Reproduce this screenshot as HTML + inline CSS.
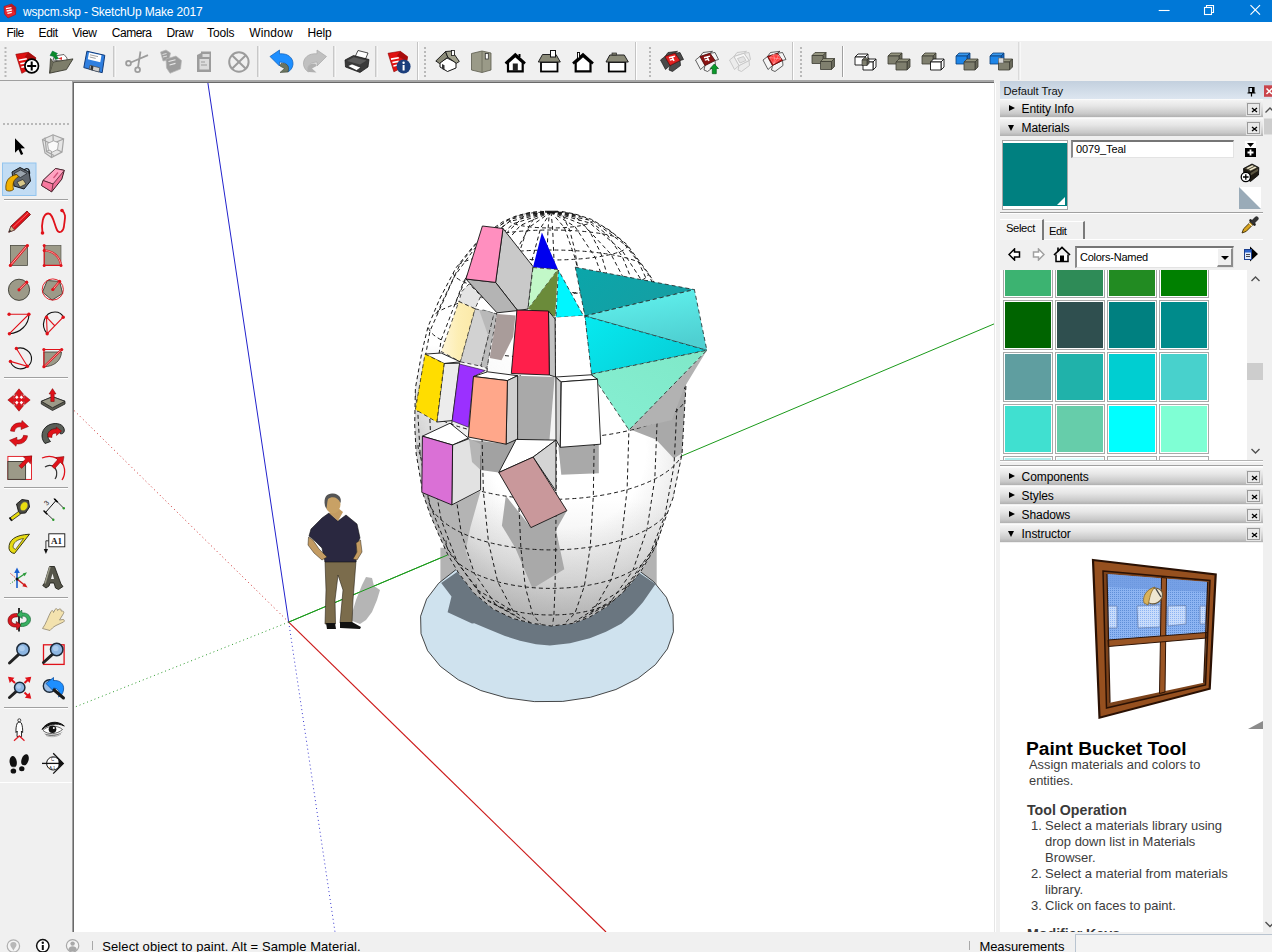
<!DOCTYPE html>
<html>
<head>
<meta charset="utf-8">
<title>wspcm.skp - SketchUp Make 2017</title>
<style>
*{box-sizing:border-box;margin:0;padding:0}
html,body{width:1272px;height:952px;overflow:hidden;background:#f0f0f0;font-family:"Liberation Sans","DejaVu Sans",sans-serif;font-size:12px;color:#000}
.abs{position:absolute}
#titlebar{position:absolute;left:0;top:0;width:1272px;height:23px;background:linear-gradient(#0078d7 0,#0078d7 22px,#7fbbeb 22px,#7fbbeb 23px);color:#fff}
#titlebar .t{position:absolute;left:23px;top:4.6px;font-size:12px;line-height:14px;white-space:nowrap;letter-spacing:-0.175px}
#menubar{position:absolute;left:0;top:22px;width:1272px;height:19px;background:#fff}
#menubar span{position:absolute;top:3.7px;font-size:12px;line-height:14px;white-space:nowrap}
#toolbar{position:absolute;left:0;top:41px;width:1272px;height:40px;background:#f0f0f0}
#toolbar .line{position:absolute;left:0;top:39px;width:72px;height:1px;background:#a0a0a0}
#leftbar{position:absolute;left:0;top:81px;width:72px;height:852px;background:#f0f0f0}
#viewport{position:absolute;left:72px;top:80px;width:922px;height:852px;background:#fff;border-left:1px solid #a0a0a0;border-top:2px solid #a8a8a8;overflow:hidden}
#viewport::before{content:"";position:absolute;left:0;top:0;right:0;bottom:0;border-left:1px solid #696969;border-top:1px solid #696969}
#tray{position:absolute;left:1000px;top:81px;width:272px;height:852px;background:#f0f0f0}
#statusbar{position:absolute;left:0;top:932px;width:1272px;height:20px;background:#f0f0f0}
#statusbar .msg{position:absolute;left:102.3px;top:7.4px;font-size:13px;line-height:15px;white-space:nowrap;letter-spacing:0.08px}
#statusbar .meas{position:absolute;left:979.5px;top:7.4px;font-size:13px;line-height:15px;white-space:nowrap;letter-spacing:-0.1px}
#statusbar .box{position:absolute;left:1075px;top:2px;width:197px;height:18px;background:#f3f3f3;border-top:1px solid #b9c4d0;border-left:1px solid #b9c4d0}
#statusbar .vs{position:absolute;top:9px;width:1px;height:9px;background:#a8a8a8}

#tray .hdr0{position:absolute;left:0;top:0;width:272px;height:18px;background:linear-gradient(#c3d0de,#dde6f0)}
#tray .hdr0 span{position:absolute;left:3.6px;top:3px;font-size:11.2px;line-height:14px;letter-spacing:-0.07px;color:#111}
.ph{position:absolute;left:0;width:263px;height:18px;background:linear-gradient(#f4f4f4 0%,#e6e6e6 35%,#c9c9c9 80%,#b0b0b0 100%);border-top:1px solid #fafafa}
.ph .tri{position:absolute;left:9px;top:4px;width:0;height:0}
.ph .tri.r{top:5px;border-left:6px solid #000;border-top:3.5px solid transparent;border-bottom:3.5px solid transparent}
.ph .tri.d{left:8px;top:6px;border-top:6px solid #000;border-left:3.5px solid transparent;border-right:3.5px solid transparent}
.ph span.l{position:absolute;left:21.6px;top:2px;font-size:12px;line-height:14px;letter-spacing:-0.1px;color:#000}
.ph .x{position:absolute;left:247px;top:3px;width:13px;height:12px;border:1px solid #9a9a9a;background:#e9e9e9;box-shadow:0 0 0 1px #e4e4e4}
.ph .x svg{position:absolute;left:3px;top:3px}
#matpanel{position:absolute;left:0;top:56px;width:263px;height:330px;background:#f0f0f0}
#instr{position:absolute;left:0;top:462px;width:263px;height:390px;background:#fff;overflow:hidden;color:#333}
#trayscroll{position:absolute;left:1264px;top:99px;width:8px;height:834px;background:#f0f0f0}

#matpanel .sw{position:absolute;left:2px;top:3px;width:66px;height:70px;border:1px solid #a6a6a6;background:#fff}
#matpanel .sw i{position:absolute;left:0;top:2px;width:64px;height:63px;background:#008080}
#matpanel .sw b{position:absolute;right:2px;top:56px;width:0;height:0;border-bottom:8px solid #fff;border-left:8px solid transparent}
#matpanel .inp{position:absolute;left:71px;top:3px;width:163px;height:18px;background:#fff;border-top:2px solid #767676;border-left:2px solid #8a8a8a;border-bottom:1px solid #e3e3e3;border-right:1px solid #e3e3e3}
#matpanel .inp span{position:absolute;left:3px;top:1px;font-size:11px;letter-spacing:-0.1px}
#matpanel .hr{position:absolute;left:0;top:75px;width:263px;height:2px;border-top:1px solid #a0a0a0;border-bottom:1px solid #fff}
#matpanel .tab1{position:absolute;left:0;top:82px;width:44px;height:21px;border-right:2px solid #7a7a7a;border-top:1px solid #fff;background:#f3f3f3}
#matpanel .tab1 span{position:absolute;left:6px;top:2px;font-size:11.2px;letter-spacing:-0.35px}
#matpanel .tab2{position:absolute;left:45px;top:84px;width:40px;height:18px;border-right:2px solid #7a7a7a;border-top:1px solid #fff}
#matpanel .tab2 span{position:absolute;left:4px;top:3px;font-size:11.2px;letter-spacing:-0.45px}
#matpanel .tabline{position:absolute;left:44px;top:102px;width:219px;height:1px;background:#fff}
#matpanel .dd{position:absolute;left:75px;top:109px;width:159px;height:22px;background:#fff;border-top:2px solid #767676;border-left:2px solid #8a8a8a;border-bottom:1px solid #e3e3e3;border-right:1px solid #e3e3e3}
#matpanel .dd span{position:absolute;left:3px;top:3px;font-size:11px;letter-spacing:-0.25px}
#matpanel .dd .btn{position:absolute;right:0;top:0;width:16px;height:19px;background:#f0f0f0;border-right:2px solid #8c8c8c;border-bottom:2px solid #8c8c8c;border-top:1px solid #fff;border-left:1px solid #fff}
#matpanel .dd .btn i{position:absolute;left:3px;top:7px;width:0;height:0;border-top:4px solid #000;border-left:4px solid transparent;border-right:4px solid transparent}
#swatches{position:absolute;left:0;top:133px;width:263px;height:190px;background:#fff;overflow:hidden}
#swatches .c{position:absolute;width:50px;height:50px;border:1px solid #a9a9a9;background:#fff}
#swatches .c i{position:absolute;left:1px;top:1px;width:46px;height:46px}
#swatches .sb{position:absolute;left:247px;top:0;width:16px;height:190px;background:#f0f0f0}
#swatches .sb .th{position:absolute;left:0;top:93px;width:16px;height:17px;background:#cdcdcd}
#matpanel .hr2{position:absolute;left:0;top:328px;width:263px;height:2px;border-top:1px solid #a0a0a0;border-bottom:1px solid #fff}
#matpanel .hr3{position:absolute;left:0;top:323px;width:263px;height:2px;border-top:1px solid #b4b4b4;border-bottom:1px solid #fff}

#instr .h1{position:absolute;left:26px;top:194.5px;font-size:19.2px;font-weight:bold;color:#000;white-space:nowrap;line-height:22px}
#instr .p{position:absolute;left:29px;top:214px;font-size:12.85px;line-height:16px;color:#3c3c3c;white-space:nowrap}
#instr .h2{position:absolute;left:27px;top:258px;font-size:14.2px;font-weight:bold;color:#3a3a3a;white-space:nowrap;line-height:18px}
#instr .li{position:absolute;left:31px;margin-top:1px;font-size:13px;line-height:16px;color:#3c3c3c;white-space:nowrap}
#instr .li b{font-weight:normal;display:inline-block;width:14px}
</style>
</head>
<body>
<div id="titlebar"><svg class="abs" style="left:3px;top:3px" width="14" height="16" viewBox="0 0 14 16"><path d="M1 3.5L8.5 1L13 4.5L12.5 11.5L5 15L1.5 11Z" fill="#e8242c" stroke="#a01018" stroke-width="0.6"/><path d="M8.5 1L13 4.5L12.5 11.5L10.5 6.5L5 4Z" fill="#b81820"/><path d="M3 5.6L8.5 4.6M3.6 8L8.8 7M4.4 10.4L8.8 9.4" stroke="#fff" stroke-width="1.3"/></svg>
<svg class="abs" style="left:1150px;top:0" width="122" height="22" viewBox="1150 0 122 22"><path d="M1158.7 10.5H1169.6" stroke="#fff" stroke-width="1.1"/><rect x="1204.5" y="7.5" width="7" height="7" fill="none" stroke="#fff" stroke-width="1.1"/><path d="M1206.5 7.5V5.5H1213.5V12.5H1211.5" fill="none" stroke="#fff" stroke-width="1.1"/><path d="M1250.5 5.2L1260 14.7M1260 5.2L1250.5 14.7" stroke="#fff" stroke-width="1.2"/></svg><div class="t">wspcm.skp - SketchUp Make 2017</div></div>
<div id="menubar">
<span style="left:6.4px;letter-spacing:-0.48px">File</span><span style="left:38.6px;letter-spacing:-0.4px">Edit</span><span style="left:72.2px;letter-spacing:-0.35px">View</span><span style="left:111.8px;letter-spacing:-0.5px">Camera</span><span style="left:166.4px;letter-spacing:-0.35px">Draw</span><span style="left:207.1px;letter-spacing:-0.16px">Tools</span><span style="left:249.3px;letter-spacing:0.12px">Window</span><span style="left:307.6px;letter-spacing:-0.17px">Help</span>
</div>
<div id="toolbar"><div class="line"></div></div>
<!--TOPTB--><svg class="abs" style="left:0;top:41px" width="1272" height="40" viewBox="0 41 1272 40">
<path d="M5.5 47V78" stroke="#b9b9b9" stroke-width="2" stroke-dasharray="2 2"/>
<g transform="translate(15.8 51.8) scale(1)"><path d="M0 2.5L12.5 0.5L20 6L18.5 15L6 21.5Z" fill="#e01010" stroke="#8a0000" stroke-width="0.6"/><path d="M12.5 0.5L20 6L18.5 15L16 9L9 5Z" fill="#a80c0c"/><path d="M3 8.5L11 7M4.5 12L11 10.8M5.5 15.5L11 14.3" stroke="#fff" stroke-width="1.6"/></g>
<circle cx="31.7" cy="66" r="6.8" fill="#fff" stroke="#000" stroke-width="1.7"/><path d="M31.7 61.5v9M27.2 66h9" stroke="#000" stroke-width="2"/>
<path d="M53 60L54.5 56L64 54.5L67 58L67 62Z" fill="#fff" stroke="#444" stroke-width="0.8"/><path d="M58 58.5l4-1.5v3z" fill="#e03030"/>
<path d="M50 55.5L52.5 51L57.5 53.5L56 55L58.5 58.5L55.5 59.5L53.5 56.5Z" fill="#0a8a2a" stroke="#064" stroke-width="0.5"/>
<path d="M49.6 73.2L53.1 62L73 58.9L66.4 69.6Z" fill="#7d7d6a" stroke="#3a3a30" stroke-width="0.9"/><path d="M49.6 73.2L50.5 58.5L53.1 62" fill="#6a6a58" stroke="#3a3a30" stroke-width="0.8"/>
<path d="M86.9 51.2L104.8 55.3L102.2 72.7L83.8 67.6Z" fill="#2f7fe0" stroke="#123c7a" stroke-width="1"/><path d="M89 52.5L101.5 55.3L100.3 62.3L87.8 59.3Z" fill="#fff"/><path d="M90 54.8l8 1.8M89.7 57l6 1.4" stroke="#777" stroke-width="0.7"/><path d="M90 65.3L99.8 67.8L99 72L89.2 69.3Z" fill="#d0d0d0" stroke="#333" stroke-width="0.6"/><path d="M91 65.6L93.5 66.3L92.8 70.2L90.3 69.5Z" fill="#333"/>
<path d="M114 46V77" stroke="#a0a0a0" stroke-width="1"/><path d="M115 46V77" stroke="#fff" stroke-width="1"/>
<g stroke="#9c9c9c" fill="none" stroke-width="1.8"><circle cx="128.5" cy="63.3" r="2.4"/><circle cx="137.6" cy="69.8" r="2.4"/><path d="M130.8 62.5L148 55.2M138 67.3L140.5 51.5"/></g>
<g fill="#9c9c9c" stroke="#b8b8b8" stroke-width="0.7"><path d="M160.5 52L166 50L170.5 53L169 60L163 61Z"/><path d="M166 59L176 56L181.5 60.5L180.5 69L170 73.3L166.5 68Z"/></g><path d="M168.5 61.5l7-1.8M169.5 65l6-1.6" stroke="#e8e8e8" stroke-width="1.1"/><path d="M162.5 54.5l4-1M163 57l4-1" stroke="#e8e8e8" stroke-width="0.9"/>
<path d="M197 55L201 53L201 51.5L211 51.5L211 72L197 72Z" fill="#9c9c9c"/><path d="M202.5 54h7v3h-7zM199.5 59h9.5v10.5h-9.5z" fill="#dcdcdc"/><path d="M201 62h4M201 65h6" stroke="#9c9c9c" stroke-width="1"/>
<g stroke="#9c9c9c" stroke-width="2" fill="none"><circle cx="238.9" cy="62" r="9.7"/><path d="M232 55.2L245.8 68.8M245.8 55.2L232 68.8"/></g>
<path d="M258 46V77" stroke="#a0a0a0" stroke-width="1"/><path d="M259 46V77" stroke="#fff" stroke-width="1"/>
<path d="M270 56.5L279.5 50V53.8C288 53 293.5 58 293 64.5C292.6 68 290.5 70.5 288 72C289.5 68 288.5 62.5 279.5 62V66Z" fill="#1e8fff" stroke="#0b5cb8" stroke-width="0.7"/><path d="M281 63.5C286 63 290 65 288 72L280 72.5L284.5 68.5L280 66Z" fill="#6b7560" stroke="#3c4436" stroke-width="0.6"/>
<path d="M326.5 56.5L317 50V53.8C308.5 53 303 58 303.5 64.5C303.9 68 306 70.5 308.5 72C307 68 308 62.5 317 62V66Z" fill="#c0c0c0" stroke="#a8a8a8" stroke-width="0.7"/><path d="M315.5 63.5C310.5 63 306.5 65 308.5 72L316.5 72.5L312 68.5L316.5 66Z" fill="#b0b0b0"/>
<path d="M334 46V77" stroke="#a0a0a0" stroke-width="1"/><path d="M335 46V77" stroke="#fff" stroke-width="1"/>
<path d="M355 57L358 50.5L368 53L365.5 59Z" fill="#fff" stroke="#222" stroke-width="0.8"/><path d="M345 60L353.5 55.5L369 59.5L368 67L360 72.5L345.5 67Z" fill="#3a3a3a" stroke="#111" stroke-width="0.7"/><path d="M347 61L353.7 57.3L366.5 60.5L360 64.5Z" fill="#5a5a5a"/><path d="M347.5 66L352 64L361 67.5L356.5 70.5Z" fill="#fff" stroke="#111" stroke-width="0.6"/>
<path d="M376 46V77" stroke="#a0a0a0" stroke-width="1"/><path d="M377 46V77" stroke="#fff" stroke-width="1"/>
<g transform="translate(388 50.8) scale(0.98)"><path d="M0 2.5L12.5 0.5L20 6L18.5 15L6 21.5Z" fill="#e01010" stroke="#8a0000" stroke-width="0.6"/><path d="M12.5 0.5L20 6L18.5 15L16 9L9 5Z" fill="#a80c0c"/><path d="M3 8.5L11 7M4.5 12L11 10.8M5.5 15.5L11 14.3" stroke="#fff" stroke-width="1.6"/></g>
<circle cx="403.6" cy="66.5" r="7" fill="#1c3f7c"/><circle cx="403.6" cy="62.8" r="1.2" fill="#fff"/><path d="M403.6 65v5.5" stroke="#fff" stroke-width="2"/>
<path d="M417.5 42V80" stroke="#c4c4c4" stroke-width="1"/><path d="M418.5 42V80" stroke="#fff" stroke-width="1"/>
<path d="M425 47V78" stroke="#b9b9b9" stroke-width="2" stroke-dasharray="2 2"/>
<path d="M440 62.5L447 58L456 62.5L456 68L447.5 71.5L440 67Z" fill="#fff" stroke="#111" stroke-width="1"/><path d="M435.8 61L445.5 51.5L447.8 57.2L439.5 63.5Z" fill="#8a8a78" stroke="#111" stroke-width="0.9"/><path d="M445.5 51.5L452 51L459.3 61.5L456.3 63.3L447.8 57.2Z" fill="#a0a08c" stroke="#111" stroke-width="0.9"/><rect x="451.5" y="50.5" width="3" height="5" fill="#fff" stroke="#111" stroke-width="0.8"/><path d="M442 64v5l2.5 1.3v-5z" fill="#333"/>
<path d="M471.5 53.5L482 51L491 53V70L482 72.5L471.5 70Z" fill="#9a9a88" stroke="#5a5a4c" stroke-width="0.8"/><path d="M482 51V72.5" stroke="#6a6a5c" stroke-width="0.8"/><rect x="485.3" y="53.5" width="3" height="5.5" fill="#fff" stroke="#333" stroke-width="0.8"/>
<path d="M505.5 63.5L515.3 54.5L525 63.5" fill="none" stroke="#000" stroke-width="2.6" stroke-linejoin="miter"/><path d="M508 62.5V71.3H522.7V62.5L515.3 56Z" fill="#fff" stroke="#000" stroke-width="2.2"/><rect x="512.8" y="63.5" width="5" height="7.5" fill="#222"/><rect x="518.5" y="54" width="2" height="3" fill="#000"/>
<rect x="541" y="62" width="16.5" height="9.5" fill="#fff" stroke="#000" stroke-width="1.8"/><path d="M538.3 62L542.5 54.5H556L560.3 62Z" fill="#8a8a78" stroke="#222" stroke-width="1"/><rect x="550.5" y="50.5" width="5" height="6.5" fill="#fff" stroke="#111" stroke-width="1"/>
<path d="M573 63.5L583 54.5L593 63.5" fill="none" stroke="#000" stroke-width="2.6"/><path d="M575.7 62.5V71.3H590.5V62.5L583 56Z" fill="#fff" stroke="#000" stroke-width="2.2"/><rect x="577.5" y="52.5" width="2" height="5.5" fill="#fff" stroke="#000" stroke-width="0.9"/>
<rect x="608.8" y="62" width="16.5" height="9.5" fill="#fff" stroke="#000" stroke-width="1.8"/><path d="M606 62L609.8 55H624.3L628.3 62Z" fill="#8a8a78" stroke="#222" stroke-width="1"/><rect x="612" y="53" width="4.5" height="2" fill="#8a8a78" stroke="#222" stroke-width="0.7"/>
<path d="M635.5 42V80" stroke="#c4c4c4" stroke-width="1"/><path d="M636.5 42V80" stroke="#fff" stroke-width="1"/>
<path d="M650 47V78" stroke="#b9b9b9" stroke-width="2" stroke-dasharray="2 2"/>
<g transform="translate(660 50.5)"><path d="M0.5 9.5L5 6L10 15L5.5 19Z" fill="#4a4a4a" stroke="#1a1a1a" stroke-width="0.7"/><path d="M5 6L8 2L17.5 0.8L15 2.8Z" fill="#4a4a4a" stroke="#1a1a1a" stroke-width="0.7"/><path d="M15 2.8L20 2L23.5 9L20 10Z" fill="#4a4a4a" stroke="#1a1a1a" stroke-width="0.7"/><path d="M10 15L20 10L20.5 15L12.5 21L9 19.5Z" fill="#4a4a4a" stroke="#1a1a1a" stroke-width="0.7"/><path d="M5 6L15 2.8L20 10L10 15Z" fill="#e02020" stroke="#5a0000" stroke-width="0.6"/><path d="M9 7.2L15 5.6M12.3 6.5L14 10.5M9.8 9.6L12.8 8.8" stroke="#fff" stroke-width="1.4" fill="none"/></g>
<g transform="translate(695 50.5)"><path d="M0.5 9.5L5 6L10 15L5.5 19Z" fill="#f4f4f4" stroke="#222" stroke-width="0.7"/><path d="M5 6L8 2L17.5 0.8L15 2.8Z" fill="#f4f4f4" stroke="#222" stroke-width="0.7"/><path d="M15 2.8L20 2L23.5 9L20 10Z" fill="#f4f4f4" stroke="#222" stroke-width="0.7"/><path d="M10 15L20 10L20.5 15L12.5 21L9 19.5Z" fill="#f4f4f4" stroke="#222" stroke-width="0.7"/><path d="M5 6L15 2.8L20 10L10 15Z" fill="#8a1414" stroke="#5a0000" stroke-width="0.6"/><path d="M9 7.2L15 5.6M12.3 6.5L14 10.5M9.8 9.6L12.8 8.8" stroke="#fff" stroke-width="1.4" fill="none"/></g>
<path d="M714.3 64L718.5 68.5H716.3V73.7H712.3V68.5H710.2Z" fill="#0a9a2a" stroke="#065a18" stroke-width="0.7"/>
<g stroke="#c4c4c4" stroke-width="0.9" fill="#ececec"><path d="M729.5 60L734 56.5L739 65.5L734.5 69.5Z"/><path d="M734 56.5L737 52.5L746.5 51.3L744 53.3Z"/><path d="M744 53.3L749 52.5L750.5 59.5L749 60.5Z"/><path d="M739 65.5L749 60.5L749.5 65.5L741.5 71.5L738 70Z"/><path d="M734 56.5L744 53.3L749 60.5L739 65.5Z" fill="#f6f6f6"/><path d="M737.5 58.5L743.5 56.5L746 60.5L740 63Z" fill="#e4e4e4"/></g>
<g transform="translate(762.5 50.5)"><path d="M0.5 9.5L5 6L10 15L5.5 19Z" fill="#f4f4f4" stroke="#222" stroke-width="0.7"/><path d="M5 6L8 2L17.5 0.8L15 2.8Z" fill="#f4f4f4" stroke="#222" stroke-width="0.7"/><path d="M15 2.8L20 2L23.5 9L20 10Z" fill="#f4f4f4" stroke="#222" stroke-width="0.7"/><path d="M10 15L20 10L20.5 15L12.5 21L9 19.5Z" fill="#f4f4f4" stroke="#222" stroke-width="0.7"/><path d="M5 6L15 2.8L20 10L10 15Z" fill="#c01010" stroke="#5a0000" stroke-width="0.6"/><path d="M7 7L11 4L16 4.5L18.5 8.5L11 13.5Z" fill="#ff3a3a" stroke="#ffb0b0" stroke-width="0.5"/><path d="M7 7L18.5 8.5M11 4L12 8L11 13.5M16 4.5L14.5 8L11 13.5" stroke="#ffc0c0" stroke-width="0.5" fill="none"/></g>
<path d="M792.5 42V80" stroke="#c4c4c4" stroke-width="1"/><path d="M793.5 42V80" stroke="#fff" stroke-width="1"/>
<path d="M801 47V78" stroke="#b9b9b9" stroke-width="2" stroke-dasharray="2 2"/>
<path d="M812 55.5L815 52.5H826L823 55.5Z" fill="#94947f" stroke="#3c3c32" stroke-width="0.8" stroke-linejoin="round"/>
<path d="M823 55.5L826 52.5V60.5L823 63.5Z" fill="#6a6a5c" stroke="#3c3c32" stroke-width="0.8" stroke-linejoin="round"/>
<rect x="812" y="55.5" width="11" height="8" fill="#7f7f6e" stroke="#3c3c32" stroke-width="0.8" stroke-linejoin="round"/>
<path d="M820.5 61.5L823.5 58.5H834.5L831.5 61.5Z" fill="#94947f" stroke="#3c3c32" stroke-width="0.8" stroke-linejoin="round"/>
<path d="M831.5 61.5L834.5 58.5V66.5L831.5 69.5Z" fill="#6a6a5c" stroke="#3c3c32" stroke-width="0.8" stroke-linejoin="round"/>
<rect x="820.5" y="61.5" width="11" height="8" fill="#7f7f6e" stroke="#3c3c32" stroke-width="0.8" stroke-linejoin="round"/>
<path d="M842.5 46V77" stroke="#a0a0a0" stroke-width="1"/><path d="M843.5 46V77" stroke="#fff" stroke-width="1"/>
<path d="M855 57L858 54H868L865 57Z" fill="#fff" stroke="#111" stroke-width="0.9" stroke-linejoin="round"/>
<path d="M865 57L868 54V62L865 65Z" fill="#fff" stroke="#111" stroke-width="0.9" stroke-linejoin="round"/>
<rect x="855" y="57" width="10" height="8" fill="#fff" stroke="#111" stroke-width="0.9" stroke-linejoin="round"/>
<path d="M863 62L866 59H876L873 62Z" fill="#fff" stroke="#111" stroke-width="0.9" stroke-linejoin="round"/>
<path d="M873 62L876 59V67L873 70Z" fill="#fff" stroke="#111" stroke-width="0.9" stroke-linejoin="round"/>
<rect x="863" y="62" width="10" height="8" fill="#fff" stroke="#111" stroke-width="0.9" stroke-linejoin="round"/>
<path d="M862 60L864 58H869L867 60Z" fill="#94947f" stroke="#222" stroke-width="0.6" stroke-linejoin="round"/>
<path d="M867 60L869 58V63.5L867 65.5Z" fill="#6a6a5c" stroke="#222" stroke-width="0.6" stroke-linejoin="round"/>
<rect x="862" y="60" width="5" height="5.5" fill="#7f7f6e" stroke="#222" stroke-width="0.6" stroke-linejoin="round"/>
<path d="M888 56L891 53H902L899 56Z" fill="#94947f" stroke="#3c3c32" stroke-width="0.8" stroke-linejoin="round"/>
<path d="M899 56L902 53V61L899 64Z" fill="#6a6a5c" stroke="#3c3c32" stroke-width="0.8" stroke-linejoin="round"/>
<rect x="888" y="56" width="11" height="8" fill="#7f7f6e" stroke="#3c3c32" stroke-width="0.8" stroke-linejoin="round"/>
<path d="M896 62L899 59H910L907 62Z" fill="#94947f" stroke="#3c3c32" stroke-width="0.8" stroke-linejoin="round"/>
<path d="M907 62L910 59V67L907 70Z" fill="#6a6a5c" stroke="#3c3c32" stroke-width="0.8" stroke-linejoin="round"/>
<rect x="896" y="62" width="11" height="8" fill="#7f7f6e" stroke="#3c3c32" stroke-width="0.8" stroke-linejoin="round"/>
<path d="M922 56L925 53H936L933 56Z" fill="#94947f" stroke="#3c3c32" stroke-width="0.8" stroke-linejoin="round"/>
<path d="M933 56L936 53V61L933 64Z" fill="#6a6a5c" stroke="#3c3c32" stroke-width="0.8" stroke-linejoin="round"/>
<rect x="922" y="56" width="11" height="8" fill="#7f7f6e" stroke="#3c3c32" stroke-width="0.8" stroke-linejoin="round"/>
<path d="M930.5 62L933.5 59H944.0L941.0 62Z" fill="#fff" stroke="#111" stroke-width="0.9" stroke-linejoin="round"/>
<path d="M941.0 62L944.0 59V67L941.0 70Z" fill="#fff" stroke="#111" stroke-width="0.9" stroke-linejoin="round"/>
<rect x="930.5" y="62" width="10.5" height="8" fill="#fff" stroke="#111" stroke-width="0.9" stroke-linejoin="round"/>
<path d="M956 56L959 53H970L967 56Z" fill="#3a9af0" stroke="#0c3f7a" stroke-width="0.8" stroke-linejoin="round"/>
<path d="M967 56L970 53V61L967 64Z" fill="#1565c0" stroke="#0c3f7a" stroke-width="0.8" stroke-linejoin="round"/>
<rect x="956" y="56" width="11" height="8" fill="#1e86e8" stroke="#0c3f7a" stroke-width="0.8" stroke-linejoin="round"/>
<path d="M964 62L967 59H978L975 62Z" fill="#94947f" stroke="#3c3c32" stroke-width="0.8" stroke-linejoin="round"/>
<path d="M975 62L978 59V67L975 70Z" fill="#6a6a5c" stroke="#3c3c32" stroke-width="0.8" stroke-linejoin="round"/>
<rect x="964" y="62" width="11" height="8" fill="#7f7f6e" stroke="#3c3c32" stroke-width="0.8" stroke-linejoin="round"/>
<path d="M990 56L993 53H1004L1001 56Z" fill="#3a9af0" stroke="#0c3f7a" stroke-width="0.8" stroke-linejoin="round"/>
<path d="M1001 56L1004 53V61L1001 64Z" fill="#1565c0" stroke="#0c3f7a" stroke-width="0.8" stroke-linejoin="round"/>
<rect x="990" y="56" width="11" height="8" fill="#1e86e8" stroke="#0c3f7a" stroke-width="0.8" stroke-linejoin="round"/>
<path d="M998.5 62L1001.5 59H1012.5L1009.5 62Z" fill="#94947f" stroke="#3c3c32" stroke-width="0.8" stroke-linejoin="round"/>
<path d="M1009.5 62L1012.5 59V67L1009.5 70Z" fill="#6a6a5c" stroke="#3c3c32" stroke-width="0.8" stroke-linejoin="round"/>
<rect x="998.5" y="62" width="11" height="8" fill="#7f7f6e" stroke="#3c3c32" stroke-width="0.8" stroke-linejoin="round"/>
<rect x="998.5" y="58" width="5" height="5" fill="#d8d8d8" stroke="#555" stroke-width="0.5"/>
<path d="M1019 42V80" stroke="#c4c4c4" stroke-width="1"/><path d="M1020 42V80" stroke="#fff" stroke-width="1"/>
</svg><!--/TOPTB-->
<div id="leftbar"></div>
<!--LEFTTB--><svg class="abs" style="left:0;top:81px" width="72" height="852" viewBox="0 81 72 852">
<path d="M3 124H70" stroke="#b9b9b9" stroke-width="2" stroke-dasharray="2 2"/>
<path d="M4 199.5H68" stroke="#a0a0a0" stroke-width="1"/><path d="M4 200.5H68" stroke="#fff" stroke-width="1"/>
<path d="M4 377.5H68" stroke="#a0a0a0" stroke-width="1"/><path d="M4 378.5H68" stroke="#fff" stroke-width="1"/>
<path d="M4 487.5H68" stroke="#a0a0a0" stroke-width="1"/><path d="M4 488.5H68" stroke="#fff" stroke-width="1"/>
<path d="M4 597.5H68" stroke="#a0a0a0" stroke-width="1"/><path d="M4 598.5H68" stroke="#fff" stroke-width="1"/>
<path d="M4 707.5H68" stroke="#a0a0a0" stroke-width="1"/><path d="M4 708.5H68" stroke="#fff" stroke-width="1"/>
<path d="M0 782.5H72" stroke="#fff" stroke-width="1"/>
<path d="M15 138.3V152.8L18.4 149.6L21 155L23.2 154L20.7 148.6L25 148.3Z" fill="#000"/>
<g stroke="#a4a4a4" stroke-width="1.2" fill="none"><path d="M42.5 139.5L53 134.8L63.6 139L62 152L51.5 157.6L45 153Z" fill="#e6e6e6"/><path d="M42.5 139.5L51.5 144L63.6 139M51.5 144V157.6M45 137.5L46.5 151.5L54 155.5M53 134.8L53.5 148L46.5 151.5M53.5 148L62 152" /><path d="M47.5 143.5L53.5 140.8L58.5 142.8L57.5 149.5L52.5 152L48.5 149.5Z" fill="#fafafa" stroke-width="0.9"/></g>
<rect x="2.5" y="163" width="33.5" height="32.5" fill="#c2dcf3" stroke="#92c4ee" stroke-width="1"/>
<path d="M12 172L20 167.5L29 172L30.5 181L24 189L14 186Z" fill="#5f666e" stroke="#15181c" stroke-width="1"/><path d="M14 173.5L20.5 170L27 173.5L20.5 177.5Z" fill="#9aa4ad" stroke="#15181c" stroke-width="0.6"/><path d="M17 182L23 179.5L26 184L20 187Z" fill="#d8c88a" stroke="#15181c" stroke-width="0.6"/><path d="M24 170C27 167 30 169 29.5 174" fill="none" stroke="#15181c" stroke-width="1.3"/><path d="M6 190C5 182 8 176 17 174.5L18.5 177C13 179.5 12.5 184 13.5 189.5C11 191.5 8 191.5 6 190Z" fill="#f0b000" stroke="#5a3c00" stroke-width="0.8"/>
<path d="M41.6 185.5L43 180.5L55.5 168.5L64.3 170.4L61.8 179.2L51.7 191.8Z" fill="#f07098" stroke="#3a1a22" stroke-width="1"/><path d="M43 180.5L55.5 168.5L64.3 170.4L53 184Z" fill="#ffa2c0" stroke="#3a1a22" stroke-width="0.7"/><path d="M41.6 185.5L43 180.5L53 184L51.7 191.8Z" fill="#f8789e" stroke="#3a1a22" stroke-width="0.7"/><path d="M53.5 178l4.5-5.5" stroke="#d05078" stroke-width="1.2"/>
<path d="M8.8 232.2L11 226L27 211L30.5 214.5L14.5 230Z" fill="#e0121a" stroke="#6a0a0a" stroke-width="0.8"/><path d="M8.8 232.2L11 226L14.5 230Z" fill="#d8b890" stroke="#444" stroke-width="0.6"/><path d="M8.8 232.2l1-2.5l1.5 1.6z" fill="#222"/><path d="M12.8 227.5L28.5 212.5" stroke="#ff7a7a" stroke-width="0.8"/>
<path d="M42.5 233C41 224 43 214 48 213.5C53 213 54 224 57 230C59 234 63.5 232 64 226C64.5 220 67 214 62 210.5" fill="none" stroke="#e0121a" stroke-width="1.8"/><circle cx="42.5" cy="233" r="1.8" fill="#e0121a"/><circle cx="62" cy="210.5" r="1.8" fill="#e0121a"/>
<rect x="10.4" y="245.4" width="17" height="20" fill="#9c9a88" stroke="#4a4a40" stroke-width="0.8"/><path d="M10.4 265.4L27.4 245.4" stroke="#e0121a" stroke-width="2.4"/><path d="M10.4 265.4L27.4 245.4" stroke="#ffc8c8" stroke-width="0.9"/><circle cx="10.4" cy="265.4" r="1.6" fill="#e0121a"/><circle cx="27.4" cy="245.6" r="1.6" fill="#e0121a"/>
<rect x="44.2" y="245.4" width="16.8" height="20" fill="#9c9a88" stroke="#4a4a40" stroke-width="0.6"/><path d="M44.2 245.4V265.4H61" stroke="#e0121a" stroke-width="1.2" fill="none"/><path d="M44.2 250.5C53 250.5 60 257 61 265.4" fill="none" stroke="#e0121a" stroke-width="2"/><path d="M44.2 250.5C53 250.5 60 257 61 265.4" fill="none" stroke="#ffd0d0" stroke-width="0.7"/><circle cx="44.2" cy="245.6" r="1.5" fill="#e0121a"/><circle cx="44.2" cy="250.5" r="1.5" fill="#e0121a"/><circle cx="44.2" cy="265.4" r="1.5" fill="#e0121a"/><circle cx="61" cy="265.4" r="1.5" fill="#e0121a"/>
<circle cx="19" cy="289.8" r="10.6" fill="#9c9a88" stroke="#3a3a32" stroke-width="0.9"/><path d="M19 289.8L26.7 282.2" stroke="#e0121a" stroke-width="2.2"/><path d="M19 289.8L26.7 282.2" stroke="#ffd0d0" stroke-width="0.8"/><circle cx="19" cy="289.8" r="1.6" fill="#e0121a"/><circle cx="26.7" cy="282.2" r="1.6" fill="#e0121a"/>
<polygon points="59.6,281.4 62.6,293.5 52.1,300.1 42.5,292.1 47.2,280.5" fill="#9c9a88" stroke="#3a3a32" stroke-width="0.9"/><circle cx="52.8" cy="289.5" r="10.6" fill="none" stroke="#e0121a" stroke-width="0.9"/><path d="M52.8 289.5L59.6 281.4" stroke="#e0121a" stroke-width="2.2"/><path d="M52.8 289.5L59.6 281.4" stroke="#ffd0d0" stroke-width="0.8"/><circle cx="52.8" cy="289.5" r="1.6" fill="#e0121a"/><circle cx="59.6" cy="281.4" r="1.6" fill="#e0121a"/>
<path d="M28.9 314.2C29 325 20 333 9.4 333.7" fill="none" stroke="#111" stroke-width="1.1"/><path d="M9.1 314.2H28.9L9.4 333.7" fill="none" stroke="#e0121a" stroke-width="1.1"/><path d="M27 316L11 332" stroke="#e0121a" stroke-width="0.9"/><circle cx="9.1" cy="314.2" r="1.7" fill="#e0121a"/><circle cx="28.9" cy="314.2" r="1.7" fill="#e0121a"/><circle cx="9.4" cy="333.7" r="1.7" fill="#e0121a"/>
<path d="M47.2 333.7C40 326 44 312 55 312C59 312 62 314 63.2 317.2" fill="none" stroke="#111" stroke-width="1.1"/><path d="M46.5 317.2L47.2 333.7L63.2 317.2M46.5 317.2L55 326" fill="none" stroke="#e0121a" stroke-width="1.1"/><circle cx="46.5" cy="317.2" r="1.7" fill="#e0121a"/><circle cx="63.2" cy="317.2" r="1.7" fill="#e0121a"/><circle cx="47.2" cy="333.7" r="1.7" fill="#e0121a"/>
<path d="M16.4 348.5C24 346 32 352 31.5 359.5C31 366 24 370 18 368.5C14 367.5 11.5 365 10.4 361.4" fill="none" stroke="#111" stroke-width="1.1"/><path d="M16.4 348.5L27.4 366.3L10.4 361.4" fill="none" stroke="#e0121a" stroke-width="1.1"/><circle cx="16.4" cy="348.5" r="1.7" fill="#e0121a"/><circle cx="10.4" cy="361.4" r="1.7" fill="#e0121a"/><circle cx="27.4" cy="366.3" r="1.7" fill="#e0121a"/>
<path d="M43.9 352H61.5C61 361 54 366.5 43.9 366.7Z" fill="#9c9a88" stroke="#3a3a32" stroke-width="0.8"/><path d="M43.9 366.7V349.5H61.7" fill="none" stroke="#e0121a" stroke-width="1.1"/><path d="M43.9 366.7L61.7 349.5" stroke="#e0121a" stroke-width="2"/><path d="M43.9 366.7L61.7 349.5" stroke="#ffd0d0" stroke-width="0.7"/><circle cx="43.9" cy="349.5" r="1.6" fill="#e0121a"/><circle cx="61.7" cy="349.5" r="1.6" fill="#e0121a"/><circle cx="43.9" cy="366.7" r="1.6" fill="#e0121a"/>
<path transform="rotate(0 19 400)" d="M19 388.8L23.6 394.4H20.6V398.4H17.4V394.4H14.4Z" fill="#e0121a" stroke="#7a0000" stroke-width="0.5"/><path transform="rotate(90 19 400)" d="M19 388.8L23.6 394.4H20.6V398.4H17.4V394.4H14.4Z" fill="#e0121a" stroke="#7a0000" stroke-width="0.5"/><path transform="rotate(180 19 400)" d="M19 388.8L23.6 394.4H20.6V398.4H17.4V394.4H14.4Z" fill="#e0121a" stroke="#7a0000" stroke-width="0.5"/><path transform="rotate(270 19 400)" d="M19 388.8L23.6 394.4H20.6V398.4H17.4V394.4H14.4Z" fill="#e0121a" stroke="#7a0000" stroke-width="0.5"/>
<path d="M14.5 395.5L23.5 404.5M23.5 395.5L14.5 404.5" stroke="#e0121a" stroke-width="3.6"/><path d="M15 397.2l1.8-1.8 1.8 1.8-1.8 1.8zM19.6 397.2l1.8-1.8 1.8 1.8-1.8 1.8zM15 402.6l1.8-1.8 1.8 1.8-1.8 1.8zM19.6 402.6l1.8-1.8 1.8 1.8-1.8 1.8z" fill="#fff"/>
<path d="M41.3 401.3L52.5 396.7L65 401.3V404L52.5 410.5L41.3 404Z" fill="#5c5c50" stroke="#222" stroke-width="0.8"/><path d="M41.3 401.3L52.5 396.7L65 401.3L52.5 407.8Z" fill="#9c9a88" stroke="#222" stroke-width="0.8"/><path d="M52.5 388.6L56 394H54.2V401.5H50.8V394H49Z" fill="#e0121a" stroke="#7a0000" stroke-width="0.5"/>
<path d="M10.5 431C11 425.5 16 422 21.5 423L22 420.5L28.5 426.5L21 429.5L21.3 427C17.5 426.3 14.8 428.5 14.5 431.5Z" fill="#e0121a" stroke="#7a0000" stroke-width="0.5"/><path d="M27.5 435.8C27 441.3 22 444.8 16.5 443.8L16 446.3L9.5 440.3L17 437.3L16.7 439.8C20.5 440.5 23.2 438.3 23.5 435.3Z" fill="#e0121a" stroke="#7a0000" stroke-width="0.5"/>
<path d="M45 443.5C40 438 41 428 50 424.5C57 422 64 424.5 64.3 430C64.5 433 62 434.5 60 433.5C60 429.5 55 428 51 430C46.5 432.5 47 438 50.5 441.5Z" fill="#5a5f58" stroke="#1a1a1a" stroke-width="0.9"/><path d="M48 437C47 432 51 428.5 56.5 429L56 427L61.5 431L56.5 435.5L56.5 433.2C53.5 432.8 51.5 434.3 52 437.5Z" fill="#e0121a" stroke="#7a0000" stroke-width="0.5"/>
<rect x="7.9" y="456.4" width="23.6" height="23" fill="#fff" stroke="#e0121a" stroke-width="0.9"/><rect x="7.9" y="461.5" width="17.7" height="17.9" fill="#9c9a88" stroke="#3a3a32" stroke-width="0.9"/><path d="M31.8 455.8L30.5 463.8L28.2 461.6L21.6 468.4L19 465.8L25.6 459L23.4 456.8Z" fill="#e0121a" stroke="#7a0000" stroke-width="0.5"/>
<path d="M42 458C52 453.5 63 459 64.5 469C65 473 64 477 62 480" fill="none" stroke="#e0121a" stroke-width="1.3"/><path d="M45 467C50 463.5 55 466 56.5 471C57 474 56.5 477 55 479" fill="none" stroke="#333" stroke-width="1.2"/><path d="M64 456.5L62.5 464.5L60.3 462.3L54.5 468.8L51.8 466.3L57.6 459.7L55.5 457.6Z" fill="#e0121a" stroke="#7a0000" stroke-width="0.5"/>
<path d="M16.5 504L22 499.5L28.5 500.5L29.5 507L25.5 513L19 513.5Z" fill="#4a4a44" stroke="#111" stroke-width="0.9"/><ellipse cx="24" cy="506.3" rx="3.6" ry="4.8" transform="rotate(30 24 506.3)" fill="#e8dc10" stroke="#555" stroke-width="0.6"/><path d="M9.8 518L18.5 511.5L20.5 514.2L11.8 520.5Z" fill="#e8dc10" stroke="#222" stroke-width="0.8"/><path d="M9.5 517.5l2.3 3.2" stroke="#111" stroke-width="1.6"/>
<path d="M45.5 512.5L56 500.5" stroke="#111" stroke-width="1"/><path d="M43.5 510.5L53.5 520M54 498.5L64 508.5" stroke="#222" stroke-width="0.9"/><path d="M43.8 510.8l3.4 3.4M54.3 498.8l3.4 3.4" stroke="#000" stroke-width="1.6"/><circle cx="53.3" cy="519.8" r="1.2" fill="#2a9a2a"/><circle cx="63.8" cy="508.3" r="1.2" fill="#2a9a2a"/>
<text x="47" y="506" font-family="Liberation Sans,sans-serif" font-size="7" fill="#222" transform="rotate(-48 47 506)">3</text>
<path d="M9 548.5C8.5 540 15 535 29.5 534.2L14.5 553.5C11.5 553 9.5 551.5 9 548.5Z" fill="#e6da12" stroke="#3a3a10" stroke-width="1"/><path d="M13 547.5C13 542.5 17 539.5 23.5 538.5L15.5 549.5Z" fill="#f0f0f0" stroke="#3a3a10" stroke-width="0.7"/>
<rect x="48.8" y="533.8" width="16" height="13" fill="#fff" stroke="#111" stroke-width="0.9"/><text x="51" y="544" font-family="Liberation Serif,serif" font-weight="bold" font-size="9" fill="#222">A1</text><path d="M48.8 540.8H45.9V549.5" fill="none" stroke="#333" stroke-width="1"/><path d="M43.8 549L48 549L45.9 553.9Z" fill="#111"/>
<path d="M17 588V570" stroke="#1a5fd0" stroke-width="1.6"/><path d="M17 567.5L19.8 573H14.2Z" fill="#1a5fd0"/><path d="M17 579L25 585.5" stroke="#d01a1a" stroke-width="1.5"/><path d="M27.6 587.4L22.3 586.2L24.8 583Z" fill="#d01a1a"/><path d="M17 579L24.5 574" stroke="#2a9a3a" stroke-width="1.4"/><path d="M27 572.3L24.6 576.3L22.8 573.4Z" fill="#2a9a3a"/><path d="M17 579L10.5 573.5" stroke="#d01a1a" stroke-width="1" stroke-dasharray="1.2 1.2"/><path d="M17 579L10.5 583.5" stroke="#2a9a3a" stroke-width="1" stroke-dasharray="1.2 1.2"/><circle cx="17" cy="579" r="1.5" fill="#111"/>
<path d="M49.5 566.5H54.5L61 584L63 586.5L58.5 589.5L55.5 588L54 583H50L49 586L46 588L42.7 585.5L44.5 583Z" fill="#55554a" stroke="#15150f" stroke-width="0.8"/><path d="M51 579H54L52.5 573.5Z" fill="#f0f0f0"/><path d="M50 566.8L45 583.5" stroke="#9a9a88" stroke-width="1.5"/>
<path d="M19 608V631.5" stroke="#000" stroke-width="1.6"/><path d="M17.5 613.5C12 613 8 616 8 620.5C8 625 12 627.5 16.5 627L16.8 630L21.5 625L16.2 621.5L16.4 624C13 624 11.5 622.5 11.5 620.5C11.5 618 14 616.5 17.5 617Z" fill="#d81820" stroke="#6a0000" stroke-width="0.6"/><path d="M20.5 626.5C26 627 30.5 624 30.5 619.5C30.5 615 26.5 612.5 22 613L21.7 610L17 615L22.3 618.5L22.1 616C25.5 616 27 617.5 27 619.5C27 622 24.5 623.5 21 623Z" fill="#38b060" stroke="#0a5a2a" stroke-width="0.6"/>
<path d="M42.5 628.5C46 624 48 617 51 611.5C52 610 53.8 610.5 53.5 612.5L55 609.5C56 608 58 608.8 57.5 610.5L59 609.2C60.3 608.3 61.8 609.5 61 611L62.3 611C63.8 611 64.3 612.5 63.3 613.8L59.5 620L63 619.5C64.5 619.5 64.8 621.3 63.5 622L56 625.5C53 627 51.5 629 50 630.5Z" fill="#f3e2ae" stroke="#9a9078" stroke-width="0.9"/>
<path d="M19.28 653.84L9.5 663" stroke="#222" stroke-width="3" stroke-linecap="round"/><circle cx="23" cy="649.5" r="6.2" fill="#8db6e2" stroke="#1c2a3a" stroke-width="1.5"/><circle cx="22" cy="648.5" r="2.79" fill="#b4d2f0" opacity="0.8"/>
<rect x="43.5" y="644.8" width="20.6" height="19.6" fill="none" stroke="#e0121a" stroke-width="1.3"/>
<path d="M52.980000000000004 653.84L43.5 662.5" stroke="#222" stroke-width="3" stroke-linecap="round"/><circle cx="56.7" cy="649.5" r="6.2" fill="#8db6e2" stroke="#1c2a3a" stroke-width="1.5"/><circle cx="55.7" cy="648.5" r="2.79" fill="#b4d2f0" opacity="0.8"/>
<path d="M15 683L9.5 678" stroke="#e0121a" stroke-width="2"/><path transform="translate(9.5 678) rotate(-137.72631099390625)" d="M2 0L-3.5 -3.5V3.5Z" fill="#e0121a"/>
<path d="M24.5 683L29.8 678" stroke="#e0121a" stroke-width="2"/><path transform="translate(29.8 678) rotate(-43.33166255170669)" d="M2 0L-3.5 -3.5V3.5Z" fill="#e0121a"/>
<path d="M24.5 692.5L29.8 697.5" stroke="#e0121a" stroke-width="2"/><path transform="translate(29.8 697.5) rotate(43.33166255170669)" d="M2 0L-3.5 -3.5V3.5Z" fill="#e0121a"/>
<path d="M16.58 691.14L9.5 697.5" stroke="#222" stroke-width="3" stroke-linecap="round"/><circle cx="19.7" cy="687.5" r="5.2" fill="#8db6e2" stroke="#1c2a3a" stroke-width="1.5"/><circle cx="18.7" cy="686.5" r="2.3400000000000003" fill="#b4d2f0" opacity="0.8"/>
<circle cx="49.5" cy="686" r="6.2" fill="#9abce4" stroke="#1c2a3a" stroke-width="1.4"/><path d="M46 683.5L53.5 677.5V680.5C60 680 64.5 684 63.5 690C63 693.5 61 696 58.5 697C60 693.5 59.5 688.5 53.5 688V691Z" fill="#1e8fff" stroke="#0b4fa0" stroke-width="0.8"/><path d="M54 690L63.5 698" stroke="#1a1a1a" stroke-width="3" stroke-linecap="round"/>
<circle cx="19.3" cy="720.3" r="1.5" fill="#fff" stroke="#111" stroke-width="0.8"/><path d="M17.3 723C16 726 15.8 729.5 16 732.5L17.2 731L17 736.5H21.6L21.4 731L22.6 732.5C22.8 729.5 22.6 726 21.3 723C20.5 722 18.2 722 17.3 723Z" fill="#fff" stroke="#111" stroke-width="0.9"/><path d="M14 740.8L19.3 736L24.5 740.8" fill="none" stroke="#e0202a" stroke-width="1.3"/>
<path d="M42 729.5C46 722 57 719.5 64.3 726C57 722.5 48 724 42 729.5Z" fill="#111" stroke="#111" stroke-width="1"/><path d="M44 733.5C49 737.5 58 737 63 731.5C58 735 50 735.5 44 733.5Z" fill="#777"/><path d="M43 730.5C47 725.5 57 724.5 62.5 729.5C57 734.5 48 735 43 730.5Z" fill="#fff" stroke="#444" stroke-width="0.8"/><circle cx="52.5" cy="729.3" r="3.8" fill="#111"/><circle cx="53.8" cy="728" r="1" fill="#fff"/><path d="M46 735.5C51 737.5 57 737 61 734" fill="none" stroke="#999" stroke-width="0.7"/>
<ellipse cx="13.2" cy="762" rx="3.6" ry="6" transform="rotate(-8 13.2 762)" fill="#111"/><ellipse cx="13.4" cy="771" rx="2.8" ry="2.6" fill="#111"/><ellipse cx="25" cy="760" rx="3.5" ry="6" transform="rotate(18 25 760)" fill="#111"/><ellipse cx="21.8" cy="768.8" rx="2.7" ry="2.5" fill="#111"/><path d="M10 767.3h7M20 764.5l6 2" stroke="#f0f0f0" stroke-width="1"/>
<circle cx="53.2" cy="763.4" r="6.6" fill="#fff" stroke="#111" stroke-width="1"/><path d="M42 763.4H62" stroke="#111" stroke-width="1.3"/><path d="M53.2 753.2L63.3 763.4L53.2 773.6" fill="none" stroke="#111" stroke-width="1.3"/><path d="M58.5 759.2L63.5 763.4L58.5 767.6Z" fill="#111"/><text x="51" y="761.3" font-family="Liberation Sans,sans-serif" font-size="4.5" fill="#333">C</text><text x="49.3" y="769" font-family="Liberation Sans,sans-serif" font-size="4" fill="#333">A.1</text>
</svg><!--/LEFTTB-->
<div id="viewport"><!--VIEW--><svg class="abs" style="left:1px;top:1px" width="920" height="849" viewBox="74 83 920 849">
<defs>
<radialGradient id="egg" cx="568" cy="450" r="185" gradientUnits="userSpaceOnUse">
<stop offset="0" stop-color="#b0b0b0" stop-opacity="0"/><stop offset="0.42" stop-color="#b0b0b0" stop-opacity="0"/><stop offset="0.7" stop-color="#b0b0b0" stop-opacity="0.35"/><stop offset="0.88" stop-color="#b0b0b0" stop-opacity="0.75"/><stop offset="1" stop-color="#a8a8a8" stop-opacity="1"/></radialGradient>
<linearGradient id="botg" x1="0" y1="500" x2="0" y2="627" gradientUnits="userSpaceOnUse"><stop offset="0" stop-color="#a0a0a0" stop-opacity="0"/><stop offset="1" stop-color="#a0a0a0" stop-opacity="0.38"/></linearGradient>
<linearGradient id="vfade" x1="0" y1="345" x2="0" y2="440" gradientUnits="userSpaceOnUse"><stop offset="0" stop-color="#000"/><stop offset="1" stop-color="#fff"/></linearGradient>
<mask id="vmask" maskUnits="userSpaceOnUse" x="380" y="200" width="360" height="450"><rect x="380" y="200" width="360" height="450" fill="url(#vfade)"/></mask>
<linearGradient id="gcy" x1="0" y1="0" x2="0.3" y2="1"><stop offset="0" stop-color="#62f5f0"/><stop offset="1" stop-color="#4fd0d2"/></linearGradient>
<linearGradient id="gcy2" x1="0" y1="0" x2="1" y2="0.6"><stop offset="0" stop-color="#06eaf0"/><stop offset="1" stop-color="#08cdd6"/></linearGradient>
<linearGradient id="gaq" x1="0" y1="1" x2="1" y2="0"><stop offset="0" stop-color="#86efd2"/><stop offset="1" stop-color="#7fe8c8"/></linearGradient>
<linearGradient id="gtl" x1="0" y1="0" x2="1" y2="0.5"><stop offset="0" stop-color="#0aa6aa"/><stop offset="1" stop-color="#169ea3"/></linearGradient>
<linearGradient id="gcr" x1="0" y1="0" x2="1" y2="0"><stop offset="0" stop-color="#fff6d8"/><stop offset="0.5" stop-color="#fdeeb4"/><stop offset="1" stop-color="#fbe9a8"/></linearGradient>
<clipPath id="eggclip"><path id="eggpath" d="M551.0 212.0L540.0 211.3L529.0 212.6L516.0 216.0L503.0 221.6L488.0 232.0L473.5 245.9L455.9 268.0L439.7 298.8L428.0 326.8L422.0 351.5L415.4 388.0L414.7 425.0L416.2 454.0L423.1 494.2L430.2 514.6L438.9 535.1L447.5 554.0L458.5 572.9L474.3 593.4L493.2 609.1L513.0 618.5L532.5 623.4L551.6 626.0L572.8 623.4L589.8 617.0L606.8 606.4L623.8 591.6L640.8 571.4L655.6 547.0L663.0 525.0L673.0 498.0L682.0 454.0L684.5 410.0L686.0 385.0L680.0 340.0L668.0 305.0L648.8 273.8L626.8 244.4L610.0 230.5L591.5 219.4L575.0 214.0L562.0 211.5Z"/></clipPath>
</defs>
<path d="M288.7 622.1L207.9 83" stroke="#2222cc" stroke-width="1" fill="none"/>
<path d="M288.7 622.1L995 323.5" stroke="#1a9a1a" stroke-width="1" fill="none"/>
<path d="M288.7 622.1L606 932" stroke="#cc1a1a" stroke-width="1.2" fill="none"/>
<path d="M288.7 622.1L335 932" stroke="#3a3ad0" stroke-width="1" stroke-dasharray="1 3" fill="none"/>
<path d="M288.7 622.1L74 707.4" stroke="#2a9a2a" stroke-width="1" stroke-dasharray="1 3" fill="none"/>
<path d="M288.7 622.1L74 410.4" stroke="#cc2a2a" stroke-width="1" stroke-dasharray="1 3" fill="none"/>
<path d="M440.4 547.7L656.7 547L656.7 585L440.4 583Z" fill="#b3b3b3"/>
<path d="M673.4 631.8L667.4 648.9L655.4 664.7L637.9 678.5L615.9 689.5L590.4 697.3L562.8 701.4L534.3 701.6L506.5 697.9L480.7 690.5L458.3 679.8L440.3 666.3L427.6 650.7L421.0 633.7L420.6 616.2L426.6 599.1L438.6 583.3L456.1 569.5L478.1 558.5L503.6 550.7L531.2 546.6L559.7 546.4L587.5 550.1L613.3 557.5L635.7 568.2L653.7 581.7L666.4 597.3L673.0 614.3Z" fill="#cfe2ee" stroke="#1a1a1a" stroke-width="0.8"/>
<path d="M441.2 583L457 572L490 600L551 620L610 600L638.6 572.5L655.6 584L650 592L642.9 602.2L633 613.5L621.7 623.4L606 631.8L589.8 638.3L570 643.2L549.9 645.6L536 644.3L520 640.8L505 636L488 629L474.3 623.3L472 623.4L447.6 612.3L451.5 596.5Z" fill="#6a7680"/>
<path d="M551.0 212.0L540.0 211.3L529.0 212.6L516.0 216.0L503.0 221.6L488.0 232.0L473.5 245.9L455.9 268.0L439.7 298.8L428.0 326.8L422.0 351.5L415.4 388.0L414.7 425.0L416.2 454.0L423.1 494.2L430.2 514.6L438.9 535.1L447.5 554.0L458.5 572.9L474.3 593.4L493.2 609.1L513.0 618.5L532.5 623.4L551.6 626.0L572.8 623.4L589.8 617.0L606.8 606.4L623.8 591.6L640.8 571.4L655.6 547.0L663.0 525.0L673.0 498.0L682.0 454.0L684.5 410.0L686.0 385.0L680.0 340.0L668.0 305.0L648.8 273.8L626.8 244.4L610.0 230.5L591.5 219.4L575.0 214.0L562.0 211.5Z" fill="#ffffff"/>
<path d="M551.0 212.0L540.0 211.3L529.0 212.6L516.0 216.0L503.0 221.6L488.0 232.0L473.5 245.9L455.9 268.0L439.7 298.8L428.0 326.8L422.0 351.5L415.4 388.0L414.7 425.0L416.2 454.0L423.1 494.2L430.2 514.6L438.9 535.1L447.5 554.0L458.5 572.9L474.3 593.4L493.2 609.1L513.0 618.5L532.5 623.4L551.6 626.0L572.8 623.4L589.8 617.0L606.8 606.4L623.8 591.6L640.8 571.4L655.6 547.0L663.0 525.0L673.0 498.0L682.0 454.0L684.5 410.0L686.0 385.0L680.0 340.0L668.0 305.0L648.8 273.8L626.8 244.4L610.0 230.5L591.5 219.4L575.0 214.0L562.0 211.5Z" fill="url(#egg)" mask="url(#vmask)"/>
<path d="M551.0 212.0L540.0 211.3L529.0 212.6L516.0 216.0L503.0 221.6L488.0 232.0L473.5 245.9L455.9 268.0L439.7 298.8L428.0 326.8L422.0 351.5L415.4 388.0L414.7 425.0L416.2 454.0L423.1 494.2L430.2 514.6L438.9 535.1L447.5 554.0L458.5 572.9L474.3 593.4L493.2 609.1L513.0 618.5L532.5 623.4L551.6 626.0L572.8 623.4L589.8 617.0L606.8 606.4L623.8 591.6L640.8 571.4L655.6 547.0L663.0 525.0L673.0 498.0L682.0 454.0L684.5 410.0L686.0 385.0L680.0 340.0L668.0 305.0L648.8 273.8L626.8 244.4L610.0 230.5L591.5 219.4L575.0 214.0L562.0 211.5Z" fill="url(#botg)"/>
<g clip-path="url(#eggclip)">
<path d="M421.8 492.4L451.8 504.9L480.6 490L480 470L498.8 472.5L505.9 493.8L503 524.7L469 527.6L455.9 532L433.8 513Z" fill="#a9a9a9" opacity="0.0"/>
<path d="M421.8 492.4L451.8 504.9L480.6 491L470.4 527.2L465.6 551L476 580L500 615L440 600L420 520Z" fill="#b4b4b4"/>
<path d="M505.8 495.7L530.9 527.6L566.9 510.7L556 530L564.3 569.3L532.5 588.4L515.2 547.7L501.9 525.7Z" fill="#a9a9a9"/>
<path d="M558.4 446.8L598.8 444.6L598.8 473.2L561.3 474.7Z" fill="#a9a9a9"/>
<path d="M629 429.1L707 350L686 385L683 452.6L673.8 458.5L656 439.4Z" fill="#a9a9a9"/>
<path d="M469 439.4L505 444L517 438L555.9 440L533 457L498.8 472.5L480 470L480.6 455Z" fill="#a2a2a2"/>
</g>
<g clip-path="url(#eggclip)">
<ellipse cx="551" cy="220" rx="42" ry="8" stroke="#1a1a1a" stroke-width="1" stroke-dasharray="4 3" fill="none"/>
<ellipse cx="551" cy="245" rx="77" ry="15" stroke="#1a1a1a" stroke-width="1" stroke-dasharray="4 3" fill="none"/>
<ellipse cx="551" cy="272" rx="98" ry="22" stroke="#1a1a1a" stroke-width="1" stroke-dasharray="4 3" fill="none"/>
<ellipse cx="551" cy="325" rx="123" ry="33" stroke="#1a1a1a" stroke-width="1" stroke-dasharray="4 3" fill="none"/>
<path d="M415 393A136 45.8 0 0 0 687 393" stroke="#1a1a1a" stroke-width="1" stroke-dasharray="4 3" fill="none"/>
<path d="M418 445A133 54.4 0 0 0 684 445" stroke="#1a1a1a" stroke-width="1" stroke-dasharray="4 3" fill="none"/>
<path d="M428 495.3A123 54.6 0 0 0 674 495.3" stroke="#1a1a1a" stroke-width="1" stroke-dasharray="4 3" fill="none"/>
<path d="M446 540.4A105 48 0 0 0 656 540.4" stroke="#1a1a1a" stroke-width="1" stroke-dasharray="4 3" fill="none"/>
<path d="M476 584.3A75 30.7 0 0 0 626 584.3" stroke="#1a1a1a" stroke-width="1" stroke-dasharray="4 3" fill="none"/>
<path d="M551.0 212.0L552.6 228.0L554.0 260.0L554.8 294.0L555.7 358.0L556.2 438.8L556.1 499.4L555.7 549.9L555.0 588.4L553.9 615.0L552.5 625.5" stroke="#1a1a1a" stroke-width="1" stroke-dasharray="4 3" fill="none"/>
<path d="M551.0 212.0L564.4 227.6L575.5 259.2L582.2 292.9L590.2 356.3L594.3 436.4L593.3 496.6L590.2 547.1L584.4 585.9L574.9 613.4L563.7 624.5" stroke="#1a1a1a" stroke-width="1" stroke-dasharray="4 3" fill="none"/>
<path d="M551.0 212.0L575.0 226.6L595.1 257.3L607.1 290.0L621.4 352.1L628.9 430.6L627.1 489.6L621.4 540.1L611.1 579.8L593.9 609.5L573.9 622.2" stroke="#1a1a1a" stroke-width="1" stroke-dasharray="4 3" fill="none"/>
<path d="M551.0 212.0L583.8 225.0L611.1 254.4L627.5 285.8L647.0 345.6L657.1 421.6L654.8 479.0L647.0 529.4L632.9 570.4L609.5 603.5L582.2 618.6" stroke="#1a1a1a" stroke-width="1" stroke-dasharray="4 3" fill="none"/>
<path d="M551.0 212.0L589.8 223.0L622.2 250.7L641.6 280.4L664.8 337.5L676.8 410.4L674.0 465.7L664.8 516.1L648.1 558.6L620.4 596.0L588.0 614.0" stroke="#1a1a1a" stroke-width="1" stroke-dasharray="4 3" fill="none"/>
<path d="M551.0 212.0L592.8 220.8L627.6 246.6L648.5 274.3L673.3 328.4L686.3 397.8L683.3 450.7L673.3 501.0L655.4 545.4L625.6 587.5L590.8 608.9" stroke="#1a1a1a" stroke-width="1" stroke-dasharray="4 3" fill="none"/>
<path d="M551.0 212.0L592.3 218.6L626.7 242.3L647.4 268.0L672.0 319.1" stroke="#1a1a1a" stroke-width="1" stroke-dasharray="4 3" fill="none"/>
<path d="M551.0 212.0L588.5 216.4L619.8 238.2L638.5 262.1L660.8 310.1" stroke="#1a1a1a" stroke-width="1" stroke-dasharray="4 3" fill="none"/>
<path d="M551.0 212.0L581.7 214.5L607.2 234.7L622.5 257.0L640.8 302.4" stroke="#1a1a1a" stroke-width="1" stroke-dasharray="4 3" fill="none"/>
<path d="M551.0 212.0L572.3 213.1L590.1 232.1L600.8 253.0L613.5 296.6" stroke="#1a1a1a" stroke-width="1" stroke-dasharray="4 3" fill="none"/>
<path d="M551.0 212.0L561.3 212.2L569.8 230.5L575.0 250.7L581.1 293.0" stroke="#1a1a1a" stroke-width="1" stroke-dasharray="4 3" fill="none"/>
<path d="M551.0 212.0L549.4 212.0L548.0 230.0L547.2 250.0L546.3 292.0" stroke="#1a1a1a" stroke-width="1" stroke-dasharray="4 3" fill="none"/>
<path d="M551.0 212.0L537.6 212.4L526.5 230.8L519.8 251.1L511.8 293.7" stroke="#1a1a1a" stroke-width="1" stroke-dasharray="4 3" fill="none"/>
<path d="M551.0 212.0L527.0 213.4L506.9 232.7L494.9 254.0L480.6 297.9" stroke="#1a1a1a" stroke-width="1" stroke-dasharray="4 3" fill="none"/>
<path d="M551.0 212.0L518.2 215.0L490.9 235.6L474.5 258.2L455.0 304.4" stroke="#1a1a1a" stroke-width="1" stroke-dasharray="4 3" fill="none"/>
<path d="M551.0 212.0L512.2 217.0L479.8 239.3L460.4 263.6L437.2 312.5" stroke="#1a1a1a" stroke-width="1" stroke-dasharray="4 3" fill="none"/>
<path d="M551.0 212.0L509.2 219.2L474.4 243.4L453.5 269.7L428.7 321.6" stroke="#1a1a1a" stroke-width="1" stroke-dasharray="4 3" fill="none"/>
<path d="M551.0 212.0L509.7 221.4L475.3 247.7L454.6 276.0L430.0 330.9L417.2 401.3L420.2 454.8L430.0 505.1L447.7 549.0L477.2 589.8L511.7 610.3" stroke="#1a1a1a" stroke-width="1" stroke-dasharray="4 3" fill="none"/>
<path d="M551.0 212.0L513.5 223.6L482.2 251.8L463.5 281.9L441.2 339.9L429.6 413.6L432.2 469.5L441.2 519.9L457.2 562.0L484.0 598.1L515.3 615.3" stroke="#1a1a1a" stroke-width="1" stroke-dasharray="4 3" fill="none"/>
<path d="M551.0 212.0L520.3 225.5L494.8 255.3L479.5 287.0L461.2 347.6L451.7 424.3L453.9 482.2L461.2 532.6L474.3 573.2L496.2 605.3L521.8 619.6" stroke="#1a1a1a" stroke-width="1" stroke-dasharray="4 3" fill="none"/>
<path d="M551.0 212.0L529.7 226.9L511.9 257.9L501.2 291.0L488.5 353.4L481.9 432.5L483.4 491.9L488.5 542.3L497.7 581.7L512.9 610.7L530.7 622.9" stroke="#1a1a1a" stroke-width="1" stroke-dasharray="4 3" fill="none"/>
<path d="M551.0 212.0L540.7 227.8L532.2 259.5L527.0 293.3L520.9 357.0L517.7 437.4L518.5 497.7L520.9 548.2L525.3 586.9L532.6 614.1L541.2 624.9" stroke="#1a1a1a" stroke-width="1" stroke-dasharray="4 3" fill="none"/>
</g>
<path d="M551.0 212.0L540.0 211.3L529.0 212.6L516.0 216.0L503.0 221.6L488.0 232.0L473.5 245.9L455.9 268.0L439.7 298.8L428.0 326.8L422.0 351.5L415.4 388.0L414.7 425.0L416.2 454.0L423.1 494.2L430.2 514.6L438.9 535.1L447.5 554.0L458.5 572.9L474.3 593.4L493.2 609.1L513.0 618.5L532.5 623.4L551.6 626.0L572.8 623.4L589.8 617.0L606.8 606.4L623.8 591.6L640.8 571.4L655.6 547.0L663.0 525.0L673.0 498.0L682.0 454.0L684.5 410.0L686.0 385.0L680.0 340.0L668.0 305.0L648.8 273.8L626.8 244.4L610.0 230.5L591.5 219.4L575.0 214.0L562.0 211.5Z" stroke="#1a1a1a" stroke-width="1" stroke-dasharray="4 3" fill="none"/>
<path d="M545 211.6L558 211.6" stroke="#111" stroke-width="1.8" opacity="0.85"/>
<path d="M461.8 291.5L469 284L480.9 295.9L475 308.8L458.8 301.5Z" fill="#e4e4e4" stroke="#222" stroke-width="0.8" stroke-linejoin="round" stroke-dasharray="4 3"/>
<path d="M482 309L494 313L491 317Z" fill="#8a9090" stroke="none" stroke-width="0.9" stroke-linejoin="round" />
<path d="M503 228.5L533 266.5L528 309L517.6 310.6L495.6 282.4Z" fill="#c9c9c9" stroke="#111" stroke-width="0.9" stroke-linejoin="round" />
<path d="M465.9 279L495.6 282.4L517.6 310.6L497 312.8Z" fill="#b4b4b4" stroke="#111" stroke-width="0.9" stroke-linejoin="round" />
<path d="M482.4 226L503 228.5L495.6 282.4L465.9 279Z" fill="#ff8fbf" stroke="#111" stroke-width="0.9" stroke-linejoin="round" />
<path d="M541.9 232.6L533 267.2L558 269.4Z" fill="#0000ee" stroke="none" stroke-width="0.9" stroke-linejoin="round" />
<path d="M533 267.5L558 269.5L528 309Z" fill="#c2f8c8" stroke="#222" stroke-width="0.8" stroke-linejoin="round" stroke-dasharray="4 3"/>
<path d="M558 269.5L528 309L555 316.5Z" fill="#6b8b3a" stroke="none" stroke-width="0.9" stroke-linejoin="round" />
<path d="M558.4 270.1L555.9 317.6L583.4 315.7Z" fill="#00f6ff" stroke="#222" stroke-width="0.8" stroke-linejoin="round" stroke-dasharray="4 3"/>
<path d="M555.9 317.6L583.4 315.7L591.5 374.1L591.2 374.8L555.6 377Z" fill="#ffffff" stroke="none" stroke-width="0.9" stroke-linejoin="round" />
<path d="M706.9 350.3L629 430L672 420L684 388Z" fill="#b2b2b2" stroke="none" stroke-width="0.9" stroke-linejoin="round" />
<path d="M575.3 267.2L694.4 289.6L584.9 316Z" fill="url(#gtl)" stroke="#222" stroke-width="0.8" stroke-linejoin="round" stroke-dasharray="4 3"/>
<path d="M584.9 316L694.4 289.6L706.9 350.3Z" fill="url(#gcy)" stroke="#222" stroke-width="0.8" stroke-linejoin="round" stroke-dasharray="4 3"/>
<path d="M584.9 316L706.9 350.3L591.5 374.1Z" fill="url(#gcy2)" stroke="#222" stroke-width="0.8" stroke-linejoin="round" stroke-dasharray="4 3"/>
<path d="M591.5 374.1L706.9 350.3L629 430Z" fill="url(#gaq)" stroke="#222" stroke-width="0.8" stroke-linejoin="round" stroke-dasharray="4 3"/>
<path d="M475 308.8L494.1 313.2L480.9 366.2L460.3 361.8Z" fill="#d2d2d2" stroke="#222" stroke-width="0.8" stroke-linejoin="round" stroke-dasharray="4 3"/>
<path d="M479 309.5L494.1 313.2L488 335Z" fill="#b9b9b9" stroke="none" stroke-width="0.9" stroke-linejoin="round" />
<path d="M494.1 313.2L497 314L486.8 368.4L480.9 366.2Z" fill="#bcbcbc" stroke="#222" stroke-width="0.8" stroke-linejoin="round" stroke-dasharray="4 3"/>
<path d="M458.8 301.5L475 308.8L460.3 361.8L441.2 351.5Z" fill="url(#gcr)" stroke="#222" stroke-width="0.8" stroke-linejoin="round" stroke-dasharray="4 3"/>
<path d="M497 314L515.4 315.4L513.2 336.8L501.5 360.3L489.7 358Z" fill="#a99c9a" stroke="none" stroke-width="0.9" stroke-linejoin="round" />
<path d="M548.5 311L555.1 319L555.5 377L549.3 375Z" fill="#c2c2c2" stroke="#111" stroke-width="0.9" stroke-linejoin="round" />
<path d="M516.9 310L548.5 311L549.3 375L511.3 373.5Z" fill="#ff1f4b" stroke="#111" stroke-width="0.9" stroke-linejoin="round" />
<path d="M425 354.1L441.2 353L460.3 361.8L444.1 363.5Z" fill="#ffffff" stroke="#111" stroke-width="0.9" stroke-linejoin="round" />
<path d="M444.1 363.5L459.6 363.2L452.2 420.6L436.8 422Z" fill="#ececec" stroke="#111" stroke-width="0.9" stroke-linejoin="round" />
<path d="M425 354.1L444.1 363.5L436.8 422L415.4 409.6Z" fill="#ffdd00" stroke="#222" stroke-width="0.8" stroke-linejoin="round" stroke-dasharray="4 3"/>
<path d="M459.6 364L485.3 370.6L473.5 376.5L468.4 427.2L452.2 420.9Z" fill="#9b30ff" stroke="#222" stroke-width="0.6" stroke-linejoin="round" />
<path d="M517.6 375.7L555.6 377L556 440L517.6 439Z" fill="#a9a9a9" stroke="none" stroke-width="0.9" stroke-linejoin="round" />
<path d="M554.6 377.2L556 377.2L556 440L549.5 440Z" fill="#f4f4f4" stroke="none" stroke-width="0.9" stroke-linejoin="round" />
<path d="M473.5 376.5L487.5 371.8L517.6 375.7L507.4 380.6Z" fill="#ffffff" stroke="#111" stroke-width="0.9" stroke-linejoin="round" />
<path d="M507.4 380.6L517.6 375.7L517.6 439L506.1 444.2Z" fill="#cfcfcf" stroke="#111" stroke-width="0.9" stroke-linejoin="round" />
<path d="M473.5 376.5L507.4 380.6L506.1 444.2L468.3 437Z" fill="#ffa78a" stroke="#111" stroke-width="0.9" stroke-linejoin="round" />
<path d="M555.9 377.2L561 382.4L560.3 447.3L556 440Z" fill="#d0d0d0" stroke="#111" stroke-width="0.9" stroke-linejoin="round" />
<path d="M555.6 377L591.2 374.8L597.5 379.2L561.3 381.8Z" fill="#ffffff" stroke="#111" stroke-width="0.9" stroke-linejoin="round" />
<path d="M561.3 381.8L597.5 379.2L600.7 444.2L560.3 447.3Z" fill="#ffffff" stroke="#111" stroke-width="0.9" stroke-linejoin="round" />
<path d="M422.4 436.2L450 423.2L468.4 438L452.6 445Z" fill="#ffffff" stroke="#111" stroke-width="0.9" stroke-linejoin="round" />
<path d="M452.6 445L469 438.7L480.6 456L480.6 490L451.8 504.9Z" fill="#e2e2e2" stroke="#111" stroke-width="0.9" stroke-linejoin="round" />
<path d="M469 438.7L480.6 444L480.6 470L472 462Z" fill="#b5b5b5" stroke="none" stroke-width="0.9" stroke-linejoin="round" />
<path d="M422.4 436.2L452.6 445L451.8 504.9L421.8 492.4Z" fill="#da70d6" stroke="#111" stroke-width="0.9" stroke-linejoin="round" />
<path d="M498.8 472.5L516.2 439.4L555.9 440.1L533.1 457.1Z" fill="#ffffff" stroke="#111" stroke-width="0.9" stroke-linejoin="round" />
<path d="M533.1 457.1L555.9 440.1L555.9 490.9Z" fill="#d4d4d4" stroke="#111" stroke-width="0.9" stroke-linejoin="round" />
<path d="M498.8 472.5L533.1 457.1L566.9 510.7L530.9 527.6Z" fill="#c9989b" stroke="#111" stroke-width="0.9" stroke-linejoin="round" />
<path d="M350 620L356 600L362 585L366 577L372 578L374 586L380 590L377 600L372 612L366 620L360 624Z" fill="#b5b5b5"/>
<path d="M288.7 622.1L447.5 555" stroke="#1a9a1a" stroke-width="1" fill="none"/>
<path d="M325 561L356 561L353 600L352 623L340 623L343 590L338 575L335 600L335.5 624L325 624L326 590Z" fill="#7b6c4c" stroke="#2a2418" stroke-width="0.6"/>
<path d="M309 536L311 529L322 518L329 513L338 521L346 515L357 524L360 538L357 544L356 562L325 562L322 548L314 540Z" fill="#2a2840" stroke="#111" stroke-width="0.6"/>
<path d="M308.5 537L313 540L319 549L327 557L322 560L314 553L308 545Z" fill="#c39b62" stroke="#2a2418" stroke-width="0.5"/>
<path d="M356 543L360.5 540L362 552L357 560L353 559L357 552Z" fill="#c39b62" stroke="#2a2418" stroke-width="0.5"/>
<path d="M329 513L338 521L343 512L338 508Z" fill="#c39b62"/>
<ellipse cx="333" cy="504" rx="7.5" ry="9.5" fill="#c8a165"/>
<path d="M325 506C323 496 328 493 333 493.5C339 494 342 498 340.5 503C338 497 332 496 328 499C327 503 327 506 326.5 509Z" fill="#555"/>
<path d="M326 623L335 623L336 629L327 629Z" fill="#111"/><path d="M340 622L352 622L361 627L360 629L340 628Z" fill="#111"/>
</svg><!--/VIEW--></div>
<div id="tray"><div class="hdr0"><span>Default Tray</span><svg class="abs" style="left:246px;top:4px" width="26" height="13" viewBox="1246 85 26 13"><path d="M1249 87.5H1254V92.5H1249Z" fill="none" stroke="#000" stroke-width="1.2"/><path d="M1253 87.5V92.5" stroke="#000" stroke-width="2"/><path d="M1247.5 93H1255.5M1251.5 93V96.5" stroke="#000" stroke-width="1.2"/><rect x="1264" y="85.3" width="8" height="11.5" fill="#c9444c"/><path d="M1266.5 88.5L1272 94M1272 88.5L1266.5 94" stroke="#fff" stroke-width="1.5"/></svg></div><div class="ph" style="top:18px"><div class="tri r"></div><span class="l">Entity Info</span><div class="x"><svg width="7" height="6" viewBox="0 0 7 6"><path d="M1 1L6 5M6 1L1 5" stroke="#000" stroke-width="1.25" fill="none"/></svg></div></div><div class="ph" style="top:37px"><div class="tri d"></div><span class="l">Materials</span><div class="x"><svg width="7" height="6" viewBox="0 0 7 6"><path d="M1 1L6 5M6 1L1 5" stroke="#000" stroke-width="1.25" fill="none"/></svg></div></div><div id="matpanel"><div class="sw"><i></i><b></b></div><div class="inp"><span>0079_Teal</span></div><div class="hr"></div><div class="tab1"><span>Select</span></div><div class="tab2"><span>Edit</span></div><div class="tabline"></div><div class="dd"><span>Colors-Named</span><div class="btn"><i></i></div></div>
<svg class="abs" style="left:245px;top:4px" width="11" height="16" viewBox="0 0 11 16"><rect x="0" y="0" width="11" height="16" fill="#fff"/><path d="M2 2h7l-3.5 4z" fill="#000"/><rect x="0" y="7" width="11" height="9" fill="#000"/><path d="M5.5 8.5v6M2.5 11.5h6" stroke="#fff" stroke-width="1.8"/></svg>
<svg class="abs" style="left:240px;top:26px" width="20" height="20" viewBox="1240 163 20 20"><path d="M1243.5 168.5L1252 164L1258.8 167.5L1258.5 175L1250.5 181.5L1244 177Z" fill="#1e1a12" stroke="#000" stroke-width="0.8"/><path d="M1244.5 168.6L1252 164.8L1257.8 167.7L1250.3 171.6Z" fill="#4a4434"/><path d="M1246.3 168.2L1252.3 165.3L1254 166.1L1248 169.1ZM1249 169.6L1255 166.6L1256.6 167.4L1250.6 170.5Z" fill="#efe8cc"/><path d="M1250.6 173L1258 168.6V171L1250.6 175.5Z" fill="#5b5540"/><circle cx="1245.8" cy="177" r="4.6" fill="#fff" stroke="#000" stroke-width="1.3"/><path d="M1245.8 174.2v5.6M1243 177h5.6" stroke="#000" stroke-width="1.3"/></svg>
<svg class="abs" style="left:239px;top:50px" width="22" height="22" viewBox="0 0 22 22"><rect width="22" height="22" fill="#fff"/><path d="M0 0L22 22H0Z" fill="#9aabb8"/></svg>
<svg class="abs" style="left:1241px;top:216px;position:absolute;left:241px;top:79px" width="18" height="18" viewBox="0 0 18 18"><path d="M1 17L2.6 12.8L10 5.5L12.5 8L5.2 15.4Z" fill="#d9a520" stroke="#3a2a08" stroke-width="0.9"/><path d="M8 7L11 10" stroke="#fff" stroke-width="0.8"/><path d="M9.5 4.5L13.5 8.5" stroke="#222" stroke-width="2.6" stroke-linecap="round"/><path d="M12 6L15.5 2.5" stroke="#333" stroke-width="4.2" stroke-linecap="round"/></svg>
<svg class="abs" style="left:244px;top:109px" width="15" height="16" viewBox="0 0 15 16"><path d="M6 0.5L14 8L6 15.5V11H2V5H6Z" fill="#000"/><rect x="0.5" y="3.5" width="7" height="10" fill="#dfe9fb" stroke="#1b3f8f" stroke-width="1"/><rect x="1" y="4" width="6" height="2.5" fill="#2b62c9"/><path d="M2 8.5h4M2 10.5h4" stroke="#333" stroke-width="0.9"/></svg>
<svg class="abs" style="left:8px;top:111px" width="13" height="13" viewBox="0 0 13 13"><path d="M6.5 1L1 6.5L6.5 12V9H11.5V4H6.5Z" fill="#fff" stroke="#000" stroke-width="1.5" stroke-linejoin="miter"/></svg>
<svg class="abs" style="left:32px;top:111px" width="13" height="13" viewBox="0 0 13 13"><path d="M6.5 1L12 6.5L6.5 12V9H1.5V4H6.5Z" fill="#fff" stroke="#a0a0a0" stroke-width="1.5" stroke-linejoin="miter"/></svg>
<svg class="abs" style="left:53px;top:109px" width="18" height="17" viewBox="0 0 18 17"><path d="M3 8.5V15.5H15V8.5" fill="#fff" stroke="#000" stroke-width="1.5"/><path d="M1 9L9 1.5L17 9" fill="none" stroke="#000" stroke-width="1.7"/><rect x="4.2" y="1.5" width="1.6" height="4" fill="#000"/><rect x="7" y="9.5" width="4" height="6" fill="#000"/></svg>
<div id="swatches"><div class="c" style="left:3px;top:-22px"><i style="background:#3cb371"></i></div><div class="c" style="left:55px;top:-22px"><i style="background:#2e8b57"></i></div><div class="c" style="left:107px;top:-22px"><i style="background:#228b22"></i></div><div class="c" style="left:159px;top:-22px"><i style="background:#008000"></i></div><div class="c" style="left:3px;top:30px"><i style="background:#006400"></i></div><div class="c" style="left:55px;top:30px"><i style="background:#2f4f4f"></i></div><div class="c" style="left:107px;top:30px"><i style="background:#008080"></i></div><div class="c" style="left:159px;top:30px"><i style="background:#008b8b"></i></div><div class="c" style="left:3px;top:82px"><i style="background:#5f9ea0"></i></div><div class="c" style="left:55px;top:82px"><i style="background:#20b2aa"></i></div><div class="c" style="left:107px;top:82px"><i style="background:#00ced1"></i></div><div class="c" style="left:159px;top:82px"><i style="background:#48d1cc"></i></div><div class="c" style="left:3px;top:134px"><i style="background:#40e0d0"></i></div><div class="c" style="left:55px;top:134px"><i style="background:#66cdaa"></i></div><div class="c" style="left:107px;top:134px"><i style="background:#00ffff"></i></div><div class="c" style="left:159px;top:134px"><i style="background:#7fffd4"></i></div><div class="c" style="left:3px;top:186px"><i style="background:#afeeee"></i></div><div class="c" style="left:55px;top:186px"><i style="background:#e0ffff"></i></div><div class="c" style="left:107px;top:186px"><i style="background:#f0ffff"></i></div><div class="c" style="left:159px;top:186px"><i style="background:#ffffff"></i></div><div class="sb"><svg style="position:absolute;left:4px;top:6px" width="9" height="6" viewBox="0 0 9 6"><path d="M0.5 5L4.5 1L8.5 5" stroke="#505050" stroke-width="1.4" fill="none"/></svg><div class="th"></div><svg style="position:absolute;left:4px;top:178px" width="9" height="6" viewBox="0 0 9 6"><path d="M0.5 1L4.5 5L8.5 1" stroke="#505050" stroke-width="1.4" fill="none"/></svg></div></div><div class="hr3"></div><div class="hr2"></div></div><div class="ph" style="top:386px"><div class="tri r"></div><span class="l">Components</span><div class="x"><svg width="7" height="6" viewBox="0 0 7 6"><path d="M1 1L6 5M6 1L1 5" stroke="#000" stroke-width="1.25" fill="none"/></svg></div></div><div class="ph" style="top:405px"><div class="tri r"></div><span class="l">Styles</span><div class="x"><svg width="7" height="6" viewBox="0 0 7 6"><path d="M1 1L6 5M6 1L1 5" stroke="#000" stroke-width="1.25" fill="none"/></svg></div></div><div class="ph" style="top:424px"><div class="tri r"></div><span class="l">Shadows</span><div class="x"><svg width="7" height="6" viewBox="0 0 7 6"><path d="M1 1L6 5M6 1L1 5" stroke="#000" stroke-width="1.25" fill="none"/></svg></div></div><div class="ph" style="top:443px"><div class="tri d"></div><span class="l">Instructor</span><div class="x"><svg width="7" height="6" viewBox="0 0 7 6"><path d="M1 1L6 5M6 1L1 5" stroke="#000" stroke-width="1.25" fill="none"/></svg></div></div><div id="instr"><svg class="abs" style="left:80px;top:8px" width="150" height="175" viewBox="1080 551 150 175">
<defs><pattern id="dots" width="2" height="2" patternUnits="userSpaceOnUse"><rect width="2" height="2" fill="#8db4f2"/><rect width="1" height="1" fill="#5f8fd8"/></pattern>
<pattern id="dots2" width="2" height="2" patternUnits="userSpaceOnUse"><rect width="2" height="2" fill="#c9dcfb"/><rect width="1" height="1" fill="#8db4f2"/></pattern></defs>
<path d="M1093 560L1215.7 574.5L1209.7 688.7L1099.5 717.7Z" fill="#96501f" stroke="#2a1104" stroke-width="2.2"/>
<path d="M1103 571L1210 580.5L1205.5 685L1106.5 708Z" fill="#7c431b" stroke="#2a1104" stroke-width="1.5"/>
<path d="M1107 574L1207.7 582L1206 637L1108.5 644Z" fill="url(#dots)"/>
<path d="M1107 574L1207.7 582L1207.2 592L1107.3 587Z" fill="#6f9ae0" opacity="0.75"/>
<path d="M1108.5 644L1206 637L1203.7 682.7L1110 702.7Z" fill="#fff"/>
<path d="M1137 606L1160 605L1160 627L1138 628Z" fill="url(#dots2)" stroke="#6f86b5" stroke-width="0.8"/>
<path d="M1168 606L1186 605.5L1186 624L1168 626Z" fill="url(#dots2)" stroke="#6f86b5" stroke-width="0.8"/>
<path d="M1108 606L1117 606L1117 628L1108.5 628Z" fill="url(#dots2)" stroke="#6f86b5" stroke-width="0.8"/>
<path d="M1200 606L1206 606L1205.5 624L1200 624Z" fill="url(#dots2)" stroke="#6f86b5" stroke-width="0.8"/>
<path d="M1161.5 577.5L1166.5 578L1165 692L1159.5 693.5Z" fill="#9a5524" stroke="#2e1406" stroke-width="1"/>
<path d="M1108 640L1207 632.5L1206.7 638L1108.3 646.5Z" fill="#9a5524" stroke="#2e1406" stroke-width="1"/>
<path d="M1107 574L1110 702.7M1207.7 582L1203.7 682.7" stroke="#2e1406" stroke-width="1.2" fill="none"/>
<ellipse cx="1154" cy="596" rx="9" ry="7.5" fill="#efe6d0" stroke="#6b5a3a" stroke-width="1.2" transform="rotate(-30 1154 596)"/>
<path d="M1144 603C1142 596 1147 589 1155 587C1150 592 1150 598 1148 605Z" fill="#d9b25a" stroke="#8a6a2a" stroke-width="0.8"/>
<path d="M1156 589L1161 597" stroke="#444" stroke-width="1.4"/>
</svg>
<svg class="abs" style="left:248px;top:178px" width="15" height="8" viewBox="0 0 15 8"><path d="M0 8L15 0V8Z" fill="#8c8c8c"/></svg><div class="h1">Paint Bucket Tool</div>
<div class="p">Assign materials and colors to<br>entities.</div>
<div class="h2">Tool Operation</div>
<div class="li" style="top:274px"><b>1.</b>Select a materials library using</div>
<div class="li" style="top:290px"><b></b>drop down list in Materials</div>
<div class="li" style="top:306px"><b></b>Browser.</div>
<div class="li" style="top:322px"><b>2.</b>Select a material from materials</div>
<div class="li" style="top:338px"><b></b>library.</div>
<div class="li" style="top:354px"><b>3.</b>Click on faces to paint.</div>
<div class="h2" style="top:382px">Modifier Keys</div></div></div>
<div id="trayscroll"><svg class="abs" style="left:0;top:0" width="8" height="834" viewBox="1264 99 8 834"><rect x="1264" y="118.5" width="8" height="16" fill="#cdcdcd"/><path d="M1265.5 112.5L1270 108L1274.5 112.5" fill="none" stroke="#505050" stroke-width="1.4"/><path d="M1265.5 922L1270 926.5L1274.5 922" fill="none" stroke="#505050" stroke-width="1.4"/></svg></div>
<div class="abs" style="left:994px;top:83px;width:2px;height:849px;background:linear-gradient(90deg,#e6e6e6 0,#e6e6e6 1px,#fff 1px)"></div>
<div id="statusbar"><svg class="abs" style="left:0;top:5px" width="90" height="15" viewBox="0 937 90 15">
<circle cx="13.4" cy="946" r="6.2" fill="#f4f4f4" stroke="#b0b0b0" stroke-width="1.2"/><path d="M13.4 942C11 942 9.9 943.8 10.4 945.6C10.9 947.3 12.6 948.6 13.4 950.8C14.2 948.6 15.9 947.3 16.4 945.6C16.9 943.8 15.8 942 13.4 942Z" fill="#b8b8b8"/>
<circle cx="42.8" cy="945.8" r="6.2" fill="#fff" stroke="#111" stroke-width="1.5"/><circle cx="42.8" cy="942.8" r="1.2" fill="#111"/><path d="M42.8 945v5" stroke="#111" stroke-width="2"/>
<circle cx="72.6" cy="945.8" r="6.2" fill="#f4f4f4" stroke="#a8a8a8" stroke-width="1.2"/><circle cx="72.6" cy="943.6" r="2.2" fill="#a8a8a8"/><path d="M68.3 950C68.8 947 70.5 946.3 72.6 946.3C74.7 946.3 76.4 947 76.9 950C75.5 951.8 69.7 951.8 68.3 950Z" fill="#a8a8a8"/></svg>
<div class="vs" style="left:92px"></div><div class="msg">Select object to paint. Alt = Sample Material.</div>
<div class="vs" style="left:969px"></div><div class="meas">Measurements</div><div class="box"></div></div>
</body>
</html>
